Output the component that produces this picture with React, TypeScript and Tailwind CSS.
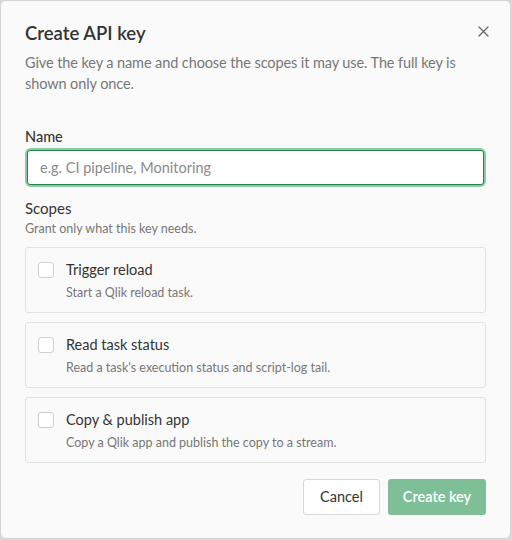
import React from "react";

const scopes = [
  { title: "Trigger reload", desc: "Start a Qlik reload task." },
  { title: "Read task status", desc: "Read a task's execution status and script-log tail." },
  { title: "Copy & publish app", desc: "Copy a Qlik app and publish the copy to a stream." },
];

export default function App() {
  return (
    <div
      className="w-[512px] h-[540px] bg-[#d9d9d9]"
      style={{ fontFamily: "Lato, 'Noto Sans', sans-serif" }}
    >
      <div className="w-[511px] h-[539px] bg-[#fafafa] rounded-[6px] border border-[#d4d4d4] px-6 pt-[16px] flex flex-col text-[#333]">
        <div className="flex items-start justify-between">
          <h1 className="text-[18.5px] leading-[28px] font-semibold text-[#333] mt-[2px]">Create API key</h1>
          <button className="mt-[4px] mr-[-7px] w-5 h-5 flex items-center justify-center text-[#666]">
            <svg width="11" height="11" viewBox="0 0 11 11" fill="none" stroke="currentColor" strokeWidth="1.3" strokeLinecap="round">
              <path d="M1 1L10 10M10 1L1 10" />
            </svg>
          </button>
        </div>
        <p className="mt-[5px] w-[440px] text-[14.5px] tracking-[-0.1px] leading-[21px] text-[#777]">
          Give the key a name and choose the scopes it may use. The full key is shown only once.
        </p>

        <label className="mt-[34px] text-[14.5px] leading-[18px] font-medium text-[#333]">Name</label>
        <div className="mt-[2px] rounded-[6px] p-[2px] bg-[#8ccaa5]">
          <input
            placeholder="e.g. CI pipeline, Monitoring"
            className="w-full h-[35px] rounded-[3px] border border-[#23844c] bg-white px-3 text-[14.5px] outline-none placeholder:text-[#8a8a8a]"
            style={{ fontFamily: "Lato, 'Noto Sans', sans-serif" }}
          />
        </div>

        <div className="mt-[11px] text-[15px] leading-[21px] text-[#333]">Scopes</div>
        <div className="mt-[1px] text-[12.5px] leading-[17px] text-[#777]">Grant only what this key needs.</div>

        <div className="mt-[10px] flex flex-col gap-[9px]">
          {scopes.map((s) => (
            <label
              key={s.title}
              className="h-[66px] rounded-[3px] border border-[#e2e2e2] bg-[#fafafa] flex items-start px-[12px] pt-[14px]"
            >
              <span className="w-4 h-4 rounded-[3px] border border-[#d0d0d0] bg-white shrink-0" />
              <span className="ml-[12px] -mt-[2px] flex flex-col">
                <span className="text-[14.5px] leading-[20px] text-[#333]">{s.title}</span>
                <span className="mt-[4px] text-[12.5px] leading-[17px] text-[#777]">{s.desc}</span>
              </span>
            </label>
          ))}
        </div>

        <div className="mt-[16px] flex justify-end gap-[8px]">
          <button className="w-[77px] h-[36px] rounded-[3px] border border-[#d8d8d8] bg-white text-[14.5px] text-[#333]">
            Cancel
          </button>
          <button className="w-[98px] h-[36px] rounded-[3px] bg-[#7ebf98] text-[14.5px] font-semibold text-white">
            Create key
          </button>
        </div>
      </div>
    </div>
  );
}
